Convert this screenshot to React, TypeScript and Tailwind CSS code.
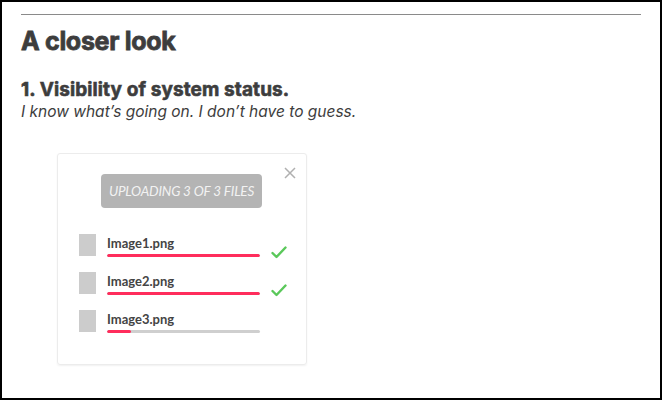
import React from "react";

function Row({ name, pct, done }: { name: string; pct: number; done: boolean }) {
  return (
    <div className="flex items-start h-[38px]">
      <div className="w-[17px] h-[22px] bg-[#cccccc] mt-[0px]" />
      <div className="ml-[11px] w-[153px]">
        <div className="text-[13px] leading-[16px] font-bold text-[#444] mt-[1px]" style={{ fontFamily: "Lato, sans-serif" }}>
          {name}
        </div>
        <div className="h-[3px] mt-[3px] bg-[#cfcfcf] rounded-full overflow-hidden">
          <div className="h-full bg-[#ff2d5c] rounded-full" style={{ width: `${pct}%` }} />
        </div>
      </div>
      {done && (
        <svg className="ml-[11px] mt-[12px]" width="16" height="13" viewBox="0 0 16 13">
          <path d="M1.5 7 L5.5 11 L14.5 1.5" fill="none" stroke="#5ac85a" strokeWidth="2.4" strokeLinecap="round" strokeLinejoin="round" />
        </svg>
      )}
    </div>
  );
}

export default function App() {
  return (
    <div className="w-[662px] h-[400px] border-2 border-black bg-white overflow-hidden" style={{ fontFamily: "Inter, sans-serif" }}>
      <div className="pl-[19px] pr-[19px] pt-[12px]">
        <div className="h-[1px] bg-[#8a8a8a]" />
        <h1 className="mt-[11px] text-[25px] leading-[30px] font-bold text-[#3d3d3d] tracking-[-0.3px] [-webkit-text-stroke:0.8px_#3d3d3d]">A closer look</h1>
        <h2 className="mt-[23px] text-[19px] leading-[22px] font-bold text-[#3d3d3d] tracking-[0.1px] [-webkit-text-stroke:0.6px_#3d3d3d]">1. Visibility of system status.</h2>
        <p className="text-[15.5px] leading-[21px] italic text-[#3d3d3d]">I know what’s going on. I don’t have to guess.</p>
        <div className="mt-[31px] ml-[36px] w-[250px] h-[212px] border border-[#ececec] rounded-[3px] shadow-[0_1px_2px_rgba(0,0,0,0.06)] relative">
          <svg className="absolute left-[226px] top-[13px]" width="12" height="12" viewBox="0 0 12 12">
            <path d="M1 1 L11 11 M11 1 L1 11" stroke="#b0b0b0" strokeWidth="1.5" />
          </svg>
          <div className="flex justify-start pl-[43px] pt-[20px]">
            <div className="w-[161px] h-[34px] rounded-[4px] bg-[#b4b4b4] flex items-center justify-center text-[13.5px] italic text-[#f2f2f2] tracking-[-0.2px]" style={{ fontFamily: "Lato, sans-serif", fontWeight: 400 }}>
              UPLOADING 3 OF 3 FILES
            </div>
          </div>
          <div className="mt-[26px] ml-[21px]">
            <Row name="Image1.png" pct={100} done />
            <Row name="Image2.png" pct={100} done />
            <Row name="Image3.png" pct={16} done={false} />
          </div>
        </div>
      </div>
    </div>
  );
}
